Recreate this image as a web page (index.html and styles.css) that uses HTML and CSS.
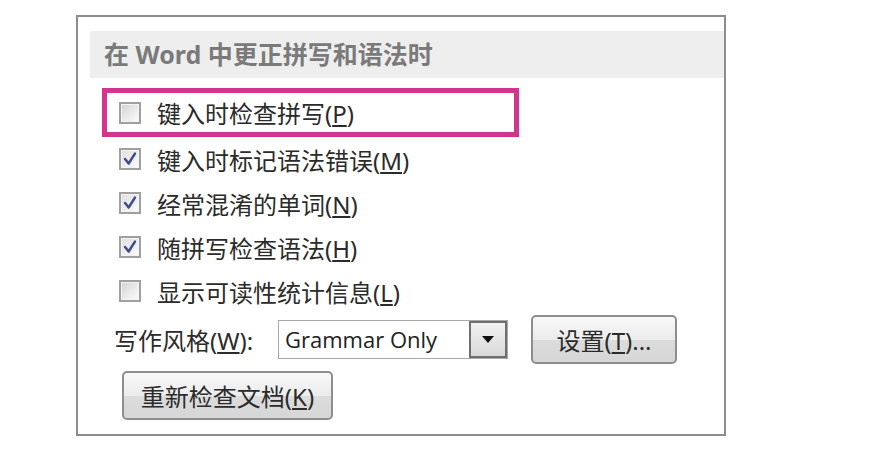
FILE: index.html
```html
<!DOCTYPE html>
<html lang="zh-CN">
<head>
<meta charset="utf-8">
<title>在 Word 中更正拼写和语法时</title>
<link rel="stylesheet" href="styles.css">
</head>
<body>
<div class="panel">
  <div class="header">在 Word 中更正拼写和语法时</div>
  <div class="options">
    <div class="highlight">
      <div class="row">
        <span class="box"></span>
        <span class="label">键入时检查拼写(<u>P</u>)</span>
      </div>
    </div>
    <div class="row indent">
      <span class="box checked"><svg viewBox="0 0 20 20" width="20" height="20"><path d="M4.5 10 L8.5 15 L15.5 4" fill="none" stroke="#3d4d8e" stroke-width="2.8" stroke-linecap="round" stroke-linejoin="round"/></svg></span>
      <span class="label">键入时标记语法错误(<u>M</u>)</span>
    </div>
    <div class="row indent">
      <span class="box checked"><svg viewBox="0 0 20 20" width="20" height="20"><path d="M4.5 10 L8.5 15 L15.5 4" fill="none" stroke="#3d4d8e" stroke-width="2.8" stroke-linecap="round" stroke-linejoin="round"/></svg></span>
      <span class="label">经常混淆的单词(<u>N</u>)</span>
    </div>
    <div class="row indent">
      <span class="box checked"><svg viewBox="0 0 20 20" width="20" height="20"><path d="M4.5 10 L8.5 15 L15.5 4" fill="none" stroke="#3d4d8e" stroke-width="2.8" stroke-linecap="round" stroke-linejoin="round"/></svg></span>
      <span class="label">随拼写检查语法(<u>H</u>)</span>
    </div>
    <div class="row indent">
      <span class="box"></span>
      <span class="label">显示可读性统计信息(<u>L</u>)</span>
    </div>
  </div>
  <div class="style-row">
    <span class="style-label">写作风格(<u>W</u>):</span>
    <div class="select">
      <span class="select-text">Grammar Only</span>
      <span class="select-btn"><svg viewBox="0 0 12 8" width="12" height="8"><path d="M0 0 H12 L6 7 Z" fill="#111"/></svg></span>
    </div>
    <button class="btn btn-settings">设置(<u>T</u>)...</button>
  </div>
  <button class="btn btn-recheck">重新检查文档(<u>K</u>)</button>
</div>
</body>
</html>
```
FILE: styles.css
```css
html, body {
  margin: 0;
  padding: 0;
  background: #ffffff;
}
body {
  font-family: "Noto Sans", "Noto Sans CJK SC", sans-serif;
  color: #2b2b2b;
}
.panel {
  margin: 15px 0 0 76px;
  width: 650px;
  height: 421px;
  box-sizing: border-box;
  border: 2px solid #8c8c8c;
  padding: 14px 0 0 12px;
}
.header {
  height: 47px;
  background: #eeeeee;
  color: #7a7a7a;
  font-weight: bold;
  font-size: 25px;
  line-height: 46px;
  padding-left: 14px;
  white-space: nowrap;
}
.options {
  display: flex;
  flex-direction: column;
  margin-top: 10px;
}
.highlight {
  margin-left: 12px;
  width: 417px;
  height: 49px;
  box-sizing: border-box;
  border: 5px solid #d4358c;
  padding-left: 12px;
  display: flex;
  align-items: center;
}
.row {
  display: flex;
  align-items: center;
  height: 44px;
  gap: 16px;
  font-size: 24px;
  white-space: nowrap;
}
.indent {
  padding-left: 29px;
}
.box {
  width: 22px;
  height: 22px;
  box-sizing: border-box;
  border: 2px solid #a0a0a0;
  background: linear-gradient(135deg, #d2d2d2 0%, #ebebeb 55%, #fbfbfb 100%);
  box-shadow: inset 0 0 0 1px #f4f4f4;
  display: flex;
  align-items: center;
  justify-content: center;
  flex: none;
}
.box.checked {
  background: linear-gradient(135deg, #dedede 0%, #f0f0f0 60%, #fcfcfc 100%);
}
.label u, .style-label u, .btn u {
  text-underline-offset: 2px;
}
.style-row {
  display: flex;
  align-items: center;
  height: 49px;
  margin-top: 2px;
  padding-left: 24px;
}
.style-label {
  font-size: 24px;
  white-space: nowrap;
  width: 164px;
}
.select {
  width: 230px;
  height: 39px;
  box-sizing: border-box;
  border: 1px solid #a8a8a8;
  background: #ffffff;
  display: flex;
  align-items: stretch;
}
.select-text {
  flex: 1;
  font-size: 22px;
  line-height: 37px;
  padding-left: 6px;
  color: #222222;
  font-family: "Open Sans", "Noto Sans", sans-serif;
  white-space: nowrap;
}
.select-btn {
  width: 38px;
  box-sizing: border-box;
  border: 2px solid #6f6f6f;
  background: linear-gradient(#f2f2f2, #d9d9d9);
  display: flex;
  align-items: center;
  justify-content: center;
}
.btn {
  font-family: "Noto Sans", "Noto Sans CJK SC", sans-serif;
  font-size: 24px;
  color: #2b2b2b;
  height: 49px;
  box-sizing: border-box;
  border: 2px solid #8e8e8e;
  border-radius: 5px;
  background: linear-gradient(#f8f8f8 0%, #ececec 50%, #dcdcdc 51%, #d6d6d6 100%);
  padding: 0;
  white-space: nowrap;
}
.btn-settings {
  width: 146px;
  margin-left: 23px;
}
.btn-recheck {
  display: block;
  width: 211px;
  margin: 7px 0 0 32px;
}
```
